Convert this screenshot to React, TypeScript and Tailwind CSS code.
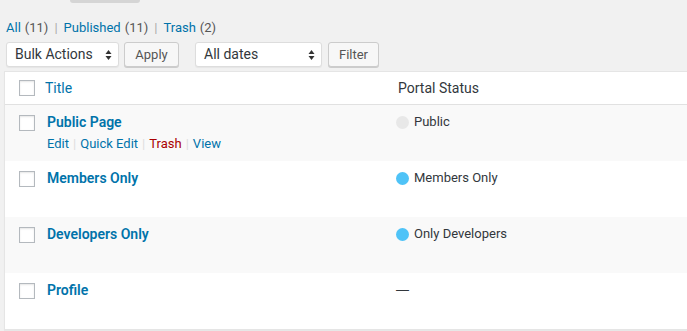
import React from "react";

type Row = {
  title: string;
  status: string | null;
  dot?: "grey" | "blue";
  actions?: boolean;
};

const rows: Row[] = [
  { title: "Public Page", status: "Public", dot: "grey", actions: true },
  { title: "Members Only", status: "Members Only", dot: "blue" },
  { title: "Developers Only", status: "Only Developers", dot: "blue" },
  { title: "Profile", status: null },
];

const Checkbox = () => (
  <span className="block w-4 h-4 bg-white border border-[#b4b9be] shadow-[inset_0_1px_2px_rgba(0,0,0,0.1)]" />
);

const SelectArrows = () => (
  <svg width="7" height="12" viewBox="0 0 7 12" className="text-[#333]">
    <path d="M3.5 1 L6.5 5 H0.5 Z" fill="currentColor" />
    <path d="M3.5 11 L6.5 7 H0.5 Z" fill="currentColor" />
  </svg>
);

export default function App() {
  return (
    <div
      className="w-[687px] h-[331px] overflow-hidden bg-[#f1f1f1] text-[#444]"
      style={{ fontFamily: "Roboto, Inter, 'Noto Sans', sans-serif" }}
    >
      <div className="h-[3px] ml-[70px] w-[70px] rounded-b bg-[#d5d5d5]" />
      <div className="pl-[6px] pt-[15px] text-[13px] leading-[20px] flex items-center">
        <span className="text-[#0073aa]">All</span>
        <span className="text-[#555] ml-1">(11)</span>
        <span className="text-[#aaa] mx-[6px]">|</span>
        <span className="text-[#0073aa]">Published</span>
        <span className="text-[#555] ml-1">(11)</span>
        <span className="text-[#aaa] mx-[6px]">|</span>
        <span className="text-[#0073aa]">Trash</span>
        <span className="text-[#555] ml-1">(2)</span>
      </div>
      <div className="flex items-center pl-[6px] mt-[4px] text-[14px] text-[#32373c]">
        <div className="w-[113px] h-[25px] bg-white rounded-[3px] border border-[#ddd] shadow-[0_1px_1px_rgba(0,0,0,0.05)] flex items-center justify-between pl-[8px] pr-[6px]">
          <span>Bulk Actions</span>
          <SelectArrows />
        </div>
        <div className="ml-[5px] w-[55px] h-[25px] bg-[#f7f7f7] rounded-[3px] border border-[#ccc] shadow-[0_1px_0_#ccc] flex items-center justify-center text-[13px] text-[#555]">
          Apply
        </div>
        <div className="ml-[16px] w-[127px] h-[25px] bg-white rounded-[3px] border border-[#ddd] shadow-[0_1px_1px_rgba(0,0,0,0.05)] flex items-center justify-between pl-[8px] pr-[6px]">
          <span>All dates</span>
          <SelectArrows />
        </div>
        <div className="ml-[6px] w-[51px] h-[25px] bg-[#f7f7f7] rounded-[3px] border border-[#ccc] shadow-[0_1px_0_#ccc] flex items-center justify-center text-[13px] text-[#555]">
          Filter
        </div>
      </div>
      <div className="ml-[4px] mt-[4px] bg-white border border-[#e5e5e5] border-r-0 shadow-[0_1px_1px_rgba(0,0,0,0.04)]">
        <div className="flex h-[33px] items-center border-b border-[#e1e1e1] text-[14px]">
          <div className="w-[40px] flex justify-center pl-[3px]">
            <Checkbox />
          </div>
          <div className="w-[353px] text-[#0073aa]">Title</div>
          <div className="text-[#32373c]">Portal Status</div>
        </div>
        {rows.map((r, i) => (
          <div
            key={r.title}
            className={`flex h-[56px] items-start ${i % 2 === 0 ? "bg-[#f9f9f9]" : "bg-white"}`}
          >
            <div className="w-[40px] flex justify-center pl-[3px] pt-[10px]">
              <Checkbox />
            </div>
            <div className="w-[351px] pl-[2px] pt-[8px]">
              <div className="text-[14px] font-semibold text-[#0073aa] leading-[18px]">{r.title}</div>
              {r.actions && (
                <div className="text-[13px] leading-[18px] mt-[4px] flex items-center">
                  <span className="text-[#0073aa]">Edit</span>
                  <span className="text-[#ddd] mx-[4px]">|</span>
                  <span className="text-[#0073aa]">Quick Edit</span>
                  <span className="text-[#ddd] mx-[4px]">|</span>
                  <span className="text-[#a00]">Trash</span>
                  <span className="text-[#ddd] mx-[4px]">|</span>
                  <span className="text-[#0073aa]">View</span>
                </div>
              )}
            </div>
            <div className="pt-[8px] flex items-center text-[13px] leading-[18px] text-[#32373c]">
              {r.status ? (
                <>
                  <span
                    className={`w-[13px] h-[13px] rounded-full mr-[5px] ${r.dot === "blue" ? "bg-[#4fc3f7]" : "bg-[#e8e8e8]"}`}
                  />
                  <span>{r.status}</span>
                </>
              ) : (
                <span className="font-['Liberation_Sans',sans-serif]">—</span>
              )}
            </div>
          </div>
        ))}
      </div>
    </div>
  );
}
